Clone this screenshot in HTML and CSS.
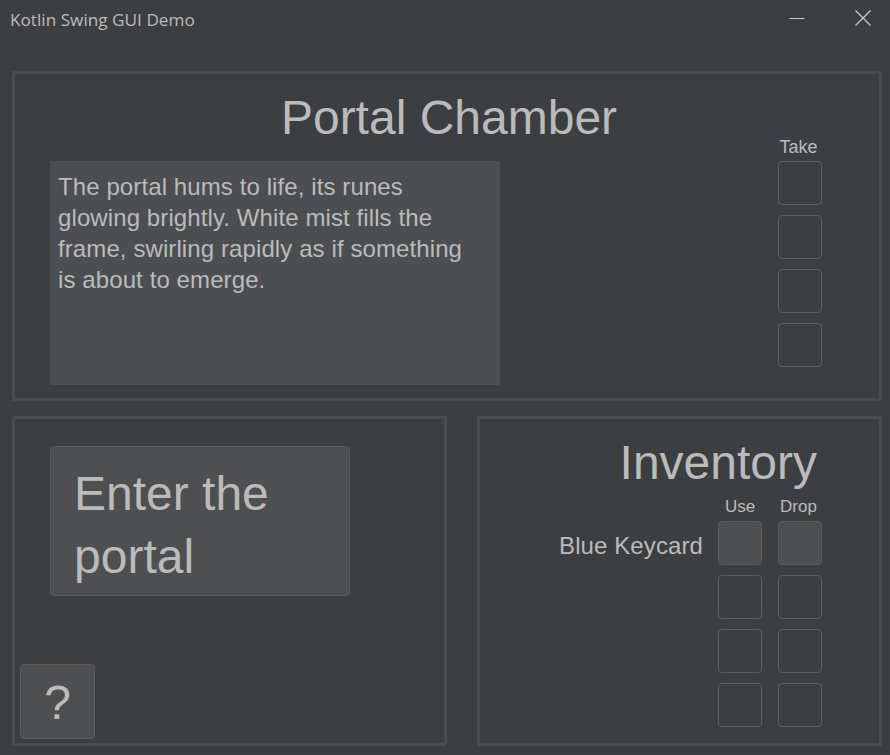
FILE: index.html
```html
<!DOCTYPE html>
<html>
<head>
<meta charset="utf-8">
<title>Kotlin Swing GUI Demo</title>
<link rel="stylesheet" href="styles.css">
</head>
<body>
<div class="window">
  <div class="titlebar">
    <span class="title-text">Kotlin Swing GUI Demo</span>
    <div class="controls">
      <span class="ctl ctl-min"><svg width="16" height="16" viewBox="0 0 16 16"><line x1="0.5" y1="8.5" x2="15.5" y2="8.5" stroke="#c8c8c8" stroke-width="1"/></svg></span>
      <span class="ctl ctl-close"><svg width="16" height="16" viewBox="0 0 16 16"><path d="M0.5 0.5 L15.5 15.5 M15.5 0.5 L0.5 15.5" stroke="#c8c8c8" stroke-width="1.3" fill="none"/></svg></span>
    </div>
  </div>
  <div class="main">
    <section class="panel room">
      <h1 class="room-title">Portal Chamber</h1>
      <div class="room-body">
        <div class="description">The portal hums to life, its runes glowing brightly. White mist fills the frame, swirling rapidly as if something is about to emerge.</div>
        <div class="take-col">
          <div class="col-label take-label">Take</div>
          <div class="slot"></div>
          <div class="slot"></div>
          <div class="slot"></div>
          <div class="slot"></div>
        </div>
      </div>
    </section>
    <div class="bottom-row">
      <section class="panel actions">
        <button class="action-btn">Enter the portal</button>
        <button class="help-btn">?</button>
      </section>
      <section class="panel inventory">
        <h2 class="inv-title">Inventory</h2>
        <div class="inv-header">
          <div class="col-label">Use</div>
          <div class="col-label">Drop</div>
        </div>
        <div class="inv-row">
          <div class="item-name">Blue Keycard</div>
          <div class="slot filled"></div>
          <div class="slot filled"></div>
        </div>
        <div class="inv-row">
          <div class="slot"></div>
          <div class="slot"></div>
        </div>
        <div class="inv-row">
          <div class="slot"></div>
          <div class="slot"></div>
        </div>
        <div class="inv-row">
          <div class="slot"></div>
          <div class="slot"></div>
        </div>
      </section>
    </div>
  </div>
</div>
</body>
</html>
```

FILE: styles.css
```css
* { box-sizing: border-box; }
html, body {
  margin: 0;
  padding: 0;
  background: #3c3f41;
}
body {
  width: 890px;
  height: 755px;
  overflow: hidden;
  color: #bbbbbb;
  font-family: "Liberation Sans", Arial, sans-serif;
}
.window {
  width: 890px;
  height: 755px;
  display: flex;
  flex-direction: column;
}
.titlebar {
  height: 40px;
  flex: none;
  display: flex;
  align-items: center;
  justify-content: space-between;
  padding-left: 10px;
}
.title-text {
  font-family: "Open Sans", "Noto Sans", sans-serif;
  font-size: 17.2px;
  color: #bbbbbb;
  margin-top: -1px;
}
.controls {
  display: flex;
  align-items: center;
  height: 40px;
}
.ctl {
  display: flex;
  align-items: center;
  justify-content: center;
}
.ctl-min { width: 16px; margin-right: 50px; margin-top: -5px; }
.ctl-close { width: 16px; margin-right: 19px; margin-top: -4px; }
.main {
  flex: 1;
  display: flex;
  flex-direction: column;
  gap: 15px;
  padding: 31px 8px 9px 12px;
}
.panel {
  border: 3px solid #4a4d4f;
  border-radius: 2px;
}
.room {
  height: 330px;
  flex: none;
  display: flex;
  flex-direction: column;
  padding: 22px 57px 0 35px;
}
.room-title {
  margin: 0;
  font-weight: normal;
  font-size: 48px;
  line-height: 44px;
  text-align: center;
  padding-left: 26px;
}
.room-body {
  display: flex;
  justify-content: space-between;
  align-items: flex-start;
}
.description {
  width: 450px;
  height: 224px;
  margin-top: 21px;
  background: #4b4f52;
  padding: 10px 22px 8px 8px;
  font-size: 24px;
  line-height: 31px;
  letter-spacing: 0.1px;
}
.take-col {
  width: 44px;
  display: flex;
  flex-direction: column;
  align-items: center;
  gap: 10px;
  margin-top: -1px;
}
.col-label {
  width: 44px;
  text-align: center;
  font-size: 17px;
  line-height: 18px;
  height: 18px;
}
.take-label {
  font-size: 18px;
  line-height: 16px;
  height: 16px;
  margin-bottom: -4px;
  padding-right: 3px;
}
.slot {
  width: 44px;
  height: 44px;
  border: 1px solid #5d6062;
  border-radius: 4px;
  flex: none;
}
.slot.filled {
  background: #4e4f51;
  border-color: #5a5c5e;
}
.bottom-row {
  display: flex;
  gap: 30px;
  height: 330px;
  flex: none;
}
.actions {
  width: 435px;
  display: flex;
  flex-direction: column;
  align-items: flex-start;
  padding: 27px 0 4px 5px;
}
.action-btn {
  width: 300px;
  height: 150px;
  margin-left: 30px;
  background: #4e4f51;
  border: 1px solid #5a5c5e;
  border-radius: 4px;
  color: #bbbbbb;
  font-family: "Liberation Sans", Arial, sans-serif;
  font-size: 48px;
  line-height: 63px;
  text-align: left;
  padding: 15px 23px 0;
  display: flex;
  align-items: flex-start;
}
.help-btn {
  margin-top: auto;
  width: 75px;
  height: 75px;
  background: #4e4f51;
  border: 1px solid #5a5c5e;
  border-radius: 4px;
  color: #bbbbbb;
  font-family: "Liberation Sans", Arial, sans-serif;
  font-size: 48px;
  line-height: 48px;
  padding: 3px 0 0 0;
  display: flex;
  align-items: center;
  justify-content: center;
}
.inventory {
  width: 405px;
  display: flex;
  flex-direction: column;
  align-items: flex-end;
  padding: 22px 57px 0 0;
}
.inv-title {
  margin: 0;
  font-weight: normal;
  font-size: 48px;
  line-height: 44px;
  margin-right: 5px;
}
.inv-header {
  display: flex;
  gap: 16px;
  margin-top: 13px;
  margin-bottom: 5px;
}
.inv-header .col-label:last-child {
  padding-right: 3px;
}
.inv-row {
  display: flex;
  align-items: flex-start;
  gap: 16px;
  margin-bottom: 10px;
}
.item-name {
  font-size: 24px;
  line-height: 39px;
  height: 44px;
  padding-top: 5px;
  margin-right: -1px;
  white-space: nowrap;
  letter-spacing: 0.1px;
}
```
